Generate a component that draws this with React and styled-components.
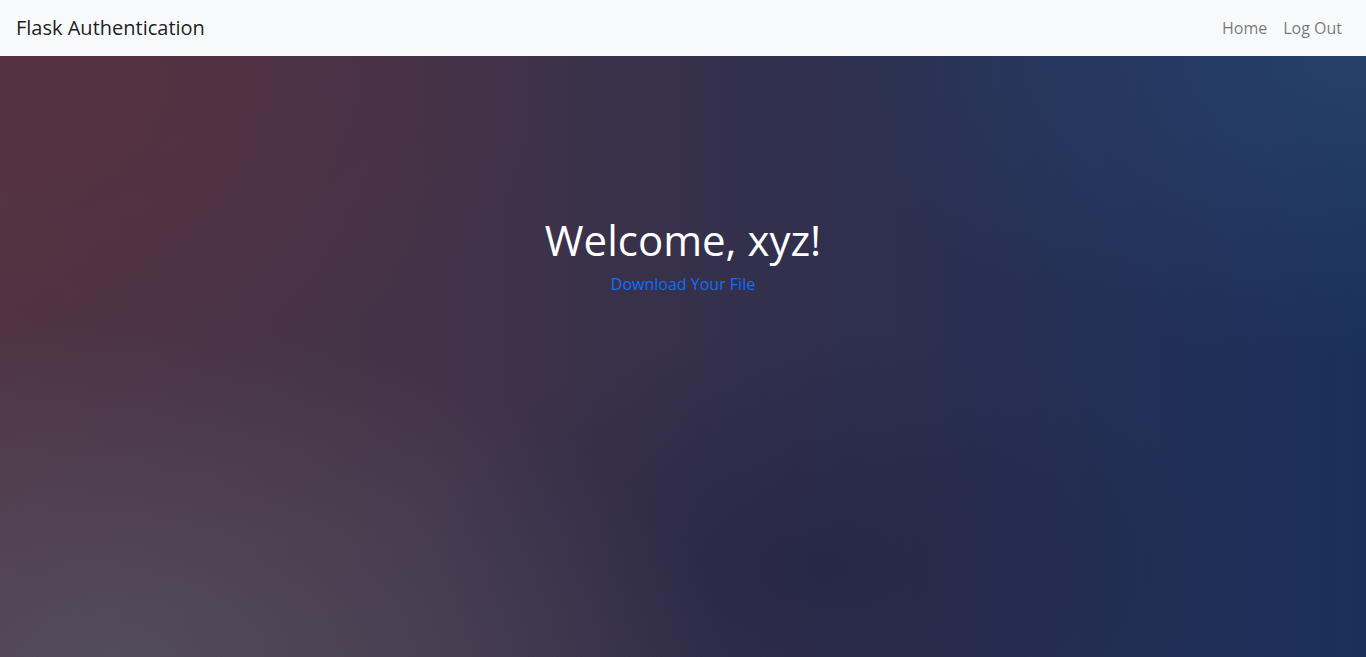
import React from 'react'
import styled, { createGlobalStyle } from 'styled-components'

const GlobalStyle = createGlobalStyle`
  html, body {
    margin: 0;
    padding: 0;
    height: 100%;
  }
  body {
    font-family: "Open Sans", "Noto Sans", "Liberation Sans", sans-serif;
    font-size: 16px;
    line-height: 1.5;
    color: #212529;
  }
  #root {
    min-height: 100vh;
    display: flex;
    flex-direction: column;
  }
`

const Navbar = styled.nav`
  height: 56px;
  box-sizing: border-box;
  background: #f8f9fa;
  display: flex;
  align-items: center;
  justify-content: space-between;
  padding: 0 16px;
`

const Brand = styled.a`
  font-size: 20px;
  color: rgba(0, 0, 0, 0.9);
  text-decoration: none;
  line-height: 30px;
`

const NavLinks = styled.div`
  display: flex;
  align-items: center;

  a {
    padding: 8px;
    color: rgba(0, 0, 0, 0.55);
    text-decoration: none;
  }
`

const Hero = styled.main`
  flex: 1;
  display: flex;
  flex-direction: column;
  align-items: center;
  padding-top: 159px;
  background:
    radial-gradient(ellipse 45% 55% at 8% 100%, rgba(84, 82, 98, 0.8), rgba(84, 82, 98, 0) 100%),
    radial-gradient(ellipse 40% 50% at 100% 0%, rgba(42, 70, 110, 0.75), rgba(42, 70, 110, 0) 100%),
    radial-gradient(ellipse 30% 40% at 60% 85%, rgba(30, 32, 64, 0.5), rgba(30, 32, 64, 0) 100%),
    radial-gradient(ellipse 35% 50% at 5% 5%, rgba(92, 48, 62, 0.6), rgba(92, 48, 62, 0) 100%),
    linear-gradient(to right, #4f3444 0%, #433348 30%, #33304c 55%, #252f55 78%, #1a305a 100%);
`

const Title = styled.h1`
  margin: 0 0 7px;
  font-size: 42px;
  font-weight: 400;
  line-height: 1.2;
  color: #fff;
`

const FileLink = styled.a`
  color: #0d6efd;
  text-decoration: none;
  font-size: 16px;
  line-height: 24px;
`

export default function App() {
  return (
    <>
      <GlobalStyle />
      <Navbar>
        <Brand href="#">Flask Authentication</Brand>
        <NavLinks>
          <a href="#">Home</a>
          <a href="#">Log Out</a>
        </NavLinks>
      </Navbar>
      <Hero>
        <Title>Welcome, xyz!</Title>
        <FileLink href="#">Download Your File</FileLink>
      </Hero>
    </>
  )
}
